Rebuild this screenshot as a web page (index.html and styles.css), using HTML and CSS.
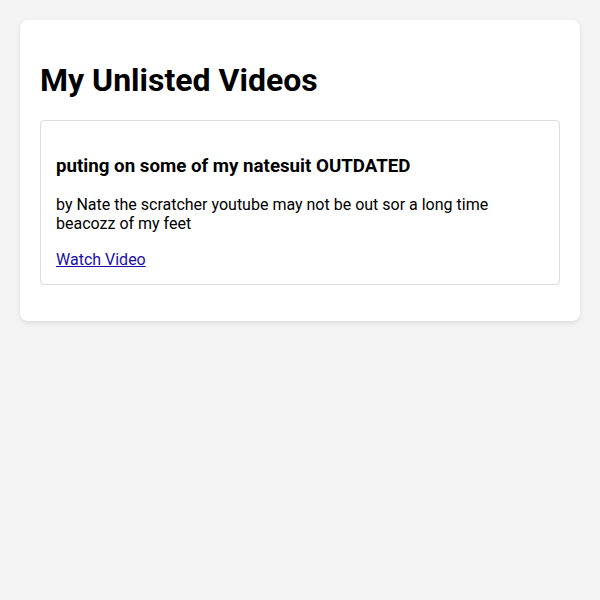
FILE: index.html
```html
<!DOCTYPE html>
<html lang="en">
<head>
<meta charset="utf-8">
<title>My Unlisted Videos</title>
<link rel="stylesheet" href="styles.css">
</head>
<body>
<div class="container">
  <h1 class="title">My Unlisted Videos</h1>
  <div class="video">
    <h3 class="video-title">puting on some of my natesuit OUTDATED</h3>
    <p class="video-desc">by Nate the scratcher youtube may not be out sor a long time beacozz of my feet</p>
    <a class="video-link" href="#">Watch Video</a>
  </div>
</div>
</body>
</html>
```
FILE: styles.css
```css
html, body {
  margin: 0;
  padding: 0;
}
body {
  background: #f4f4f4;
  font-family: Roboto, "Liberation Sans", Arial, sans-serif;
  color: #000;
  padding: 20px;
}
.container {
  background: #fff;
  border-radius: 8px;
  box-shadow: 0 2px 5px rgba(0, 0, 0, 0.1);
  padding: 20px;
}
.title {
  font-size: 32px;
  font-weight: 700;
  margin: 21px 0;
}
.video {
  border: 1px solid #ddd;
  border-radius: 4px;
  padding: 15px;
  margin-bottom: 16px;
}
.video-title {
  font-size: 18.72px;
  font-weight: 700;
  margin: 18.72px 0;
}
.video-desc {
  font-size: 16px;
  margin: 16px 0;
}
.video-link {
  display: inline-block;
  font-size: 16px;
  color: #1a0dab;
  margin-top: 1px;
}
```
